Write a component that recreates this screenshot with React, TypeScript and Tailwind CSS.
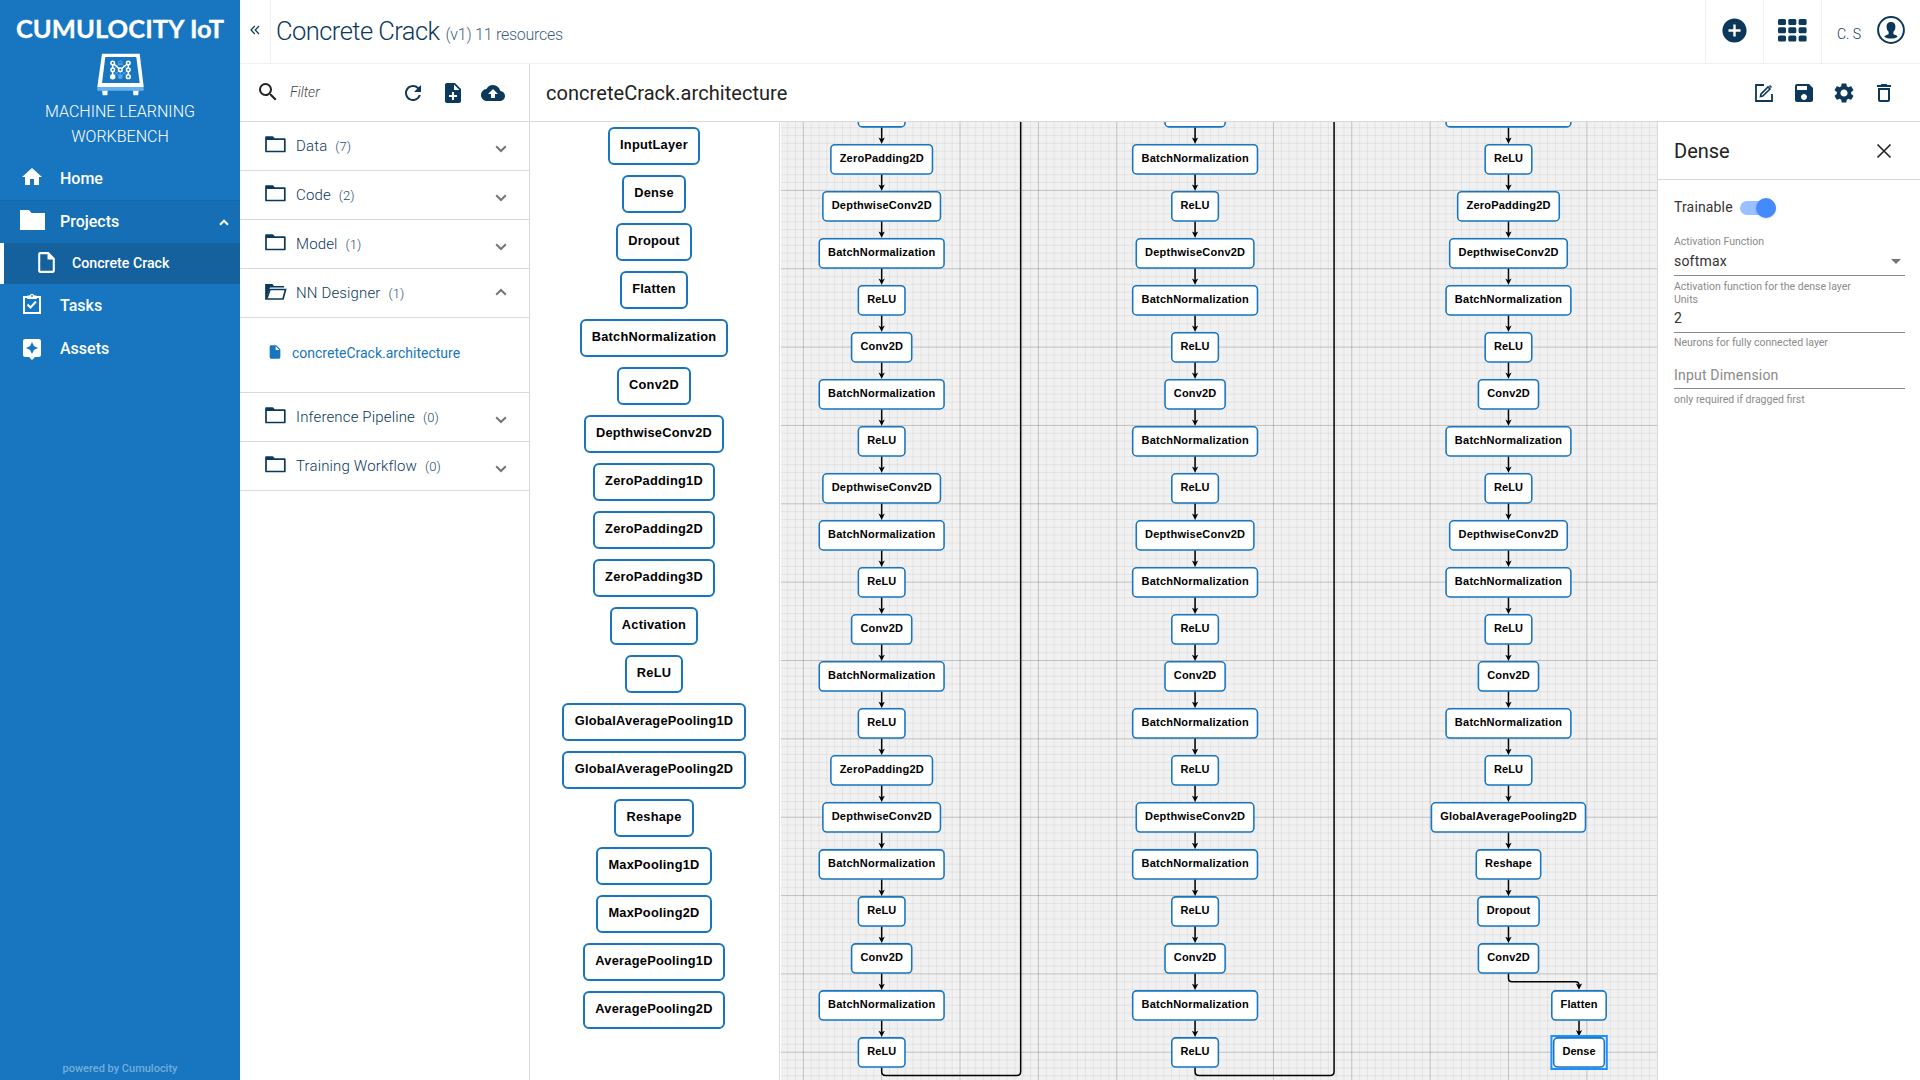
import React from "react";
import {
  MdHome, MdOutlineInsertDriveFile, MdAssistant, MdSearch, MdRefresh, MdCloudUpload, MdNoteAdd,
  MdSave, MdSettings, MdDeleteOutline, MdInsertDriveFile, MdAddCircle,
} from "react-icons/md";

const S = 0.7835;
const COLS = [881.67, 1195.07, 1508.47];
const ROW0 = 159.2;
const PITCH = 47.01;
const OX = 781;
const OY = 122;

const WIDTHS: Record<string, number> = {
  ReLU: 47.2, Conv2D: 60.7, BatchNormalization: 125.4, DepthwiseConv2D: 118.2, ZeroPadding2D: 102.2,
  GlobalAveragePooling2D: 154.6, Reshape: 65, Dropout: 61.8, Flatten: 55, Dense: 51.2,
};
const R = "ReLU", C = "Conv2D", B = "BatchNormalization", D = "DepthwiseConv2D", Z = "ZeroPadding2D";
const CHAINS: string[][] = [
  [R, Z, D, B, R, C, B, R, D, B, R, C, B, R, Z, D, B, R, C, B, R],
  [C, B, R, D, B, R, C, B, R, D, B, R, C, B, R, D, B, R, C, B, R],
  [B, R, Z, D, B, R, C, B, R, D, B, R, C, B, R, "GlobalAveragePooling2D", "Reshape", "Dropout", C],
];

const PALETTE: [string, number][] = [
  ["InputLayer", 92], ["Dense", 64], ["Dropout", 76], ["Flatten", 68], [B, 148], [C, 74], [D, 140],
  ["ZeroPadding1D", 122], [Z, 122], ["ZeroPadding3D", 122], ["Activation", 88], [R, 58],
  ["GlobalAveragePooling1D", 184], ["GlobalAveragePooling2D", 184], ["Reshape", 80], ["MaxPooling1D", 116],
  ["MaxPooling2D", 116], ["AveragePooling1D", 142], ["AveragePooling2D", 142],
];

function Node({ label, x, y, bare }: { label: string; x: number; y: number; bare?: boolean }) {
  const w = WIDTHS[label];
  return (
    <g>
      <rect x={x - w / 2 + 0.3} y={y - 14.5} width={w - 0.6} height={29.2} rx={4} fill="#fff" stroke="#1776bf" strokeWidth={1.55} />
      {!bare && (
        <text x={x} y={y + 2.8} textAnchor="middle" className="fill-black font-['Liberation_Sans',sans-serif] text-[11px] font-bold" textLength={w - 18.2} lengthAdjust="spacing">{label}</text>
      )}
    </g>
  );
}

function Arrow({ x, y }: { x: number; y: number }) {
  return <path d={`M${x} ${y} l-3.13 -6.27 l3.13 1.57 l3.13 -1.57 z`} />;
}

function gridLines() {
  const minor: string[] = [];
  const major: string[] = [];
  for (let i = -3; i < 110; i++) {
    const x = 803.33 - OX + i * 10 * S;
    (i % 10 === 0 ? major : minor).push(`M${x.toFixed(2)} 0V958`);
  }
  for (let i = -9; i < 115; i++) {
    const y = 190.4 - OY + i * 10 * S;
    (i % 10 === 0 ? major : minor).push(`M0 ${y.toFixed(2)}H876`);
  }
  return { minor: minor.join(""), major: major.join("") };
}

function Diagram() {
  const grid = gridLines();
  const cx = (c: number) => COLS[c] - OX;
  const cy = (k: number) => ROW0 - OY + k * PITCH;
  const fx = 1579 - OX;
  return (
    <svg width="876" height="958" viewBox="0 0 876 958" className="block bg-[#f1f1f1]">
      <path d={grid.minor} stroke="#000" strokeOpacity={0.07} strokeWidth={0.8} fill="none" />
      <path d={grid.major} stroke="#000" strokeOpacity={0.22} strokeWidth={0.9} fill="none" />
      <g stroke="#000" strokeWidth={1.5} fill="none">
        {CHAINS.map((ch, c) => ch.slice(1).map((_, i) => (
          <path key={`${c}-${i}`} d={`M${cx(c)} ${cy(i - 1) + 15}V${cy(i) - 18}`} />
        )))}
        {[0, 1].map((c) => (
          <path key={c} d={`M${cx(c)} ${cy(19) + 15}V949.4q0 4 4 4H${cx(c) + 135}q4 0 4 -4V0`} />
        ))}
        <path d={`M${cx(2)} ${cy(17) + 15}v5q0 3.5 3.5 3.5H${fx - 3.5}q3.5 0 3.5 3.5`} />
        <path d={`M${fx} ${cy(18) + 15}V${cy(19) - 19}`} />
      </g>
      {CHAINS.map((ch, c) => ch.slice(1).map((_, i) => <Arrow key={`${c}-${i}`} x={cx(c)} y={cy(i) - 15.4} />))}
      <Arrow x={fx} y={cy(18) - 15.6} />
      <Arrow x={fx} y={cy(19) - 16} />
      {CHAINS.map((ch, c) => ch.map((l, i) => <Node key={`${c}-${i}`} label={l} x={cx(c)} y={cy(i - 1)} bare={i === 0} />))}
      <Node label="Flatten" x={fx} y={cy(18)} />
      <Node label="Dense" x={fx} y={cy(19)} />
      <rect x={fx - 27.6} y={cy(19) - 16.4} width={55.4} height={33} fill="none" stroke="#1e90ff" strokeWidth={2} />
    </svg>
  );
}

function Palette() {
  return (
    <div className="flex w-[250px] shrink-0 flex-col items-center gap-[10px] border-r border-[#d9d9d9] pr-[1px] pt-[5px]">
      {PALETTE.map(([l, w]) => (
        <div key={l} className="flex h-[38px] shrink-0 items-center justify-center rounded-[6px] border-2 border-[#1776bf] pb-[3px] font-['Liberation_Sans',sans-serif] text-[12.8px] font-bold tracking-[0.25px] text-black" style={{ width: w }}>
          {l}
        </div>
      ))}
    </div>
  );
}

function BenchLogo() {
  return (
    <svg width="47" height="43" viewBox="0 0 47 43" className="shrink-0">
      <path fillRule="evenodd" d="M5 .7h37.700L46.700 34H.3zM8.300 4L5 30h37.700L39.300 4z" fill="#fff" />
      <path d="M.3 34h46.400v3.700H.3z" fill="#64b0f0" />
      <path d="M5 37.700h5.700l-.3 4.500H5.700zM36 37.700h5.700l-.6 4.500h-4.700z" fill="#fff" />
      <g stroke="#5aa5e6" strokeWidth="1" fill="none">
        <path d="M15.700 16.700l7.600-6.700 8 6.700M15.700 23.700l7.600-7 8 7M15.700 16.700l7.600 7 8-7M23.300 17v6" />
        <circle cx="23.300" cy="9.800" r="1.900" /><circle cx="23.300" cy="23.700" r="1.900" fill="#5aa5e6" />
      </g>
      <g stroke="#fff" strokeWidth="1.500" fill="#1776bf">
        <path d="M15.700 23.700V10l7.600 6.700 8-6.700v13.700" fill="none" />
        <circle cx="15.700" cy="10" r="1.800" /><circle cx="31.300" cy="10" r="1.800" />
        <circle cx="15.700" cy="16.700" r="1.800" /><circle cx="31.300" cy="16.700" r="1.800" /><circle cx="23.300" cy="16.700" r="1.800" />
        <circle cx="15.700" cy="23.700" r="2" fill="#fff" /><circle cx="31.300" cy="23.700" r="1.900" />
      </g>
    </svg>
  );
}

function TaskIcon() {
  return (
    <svg width="20" height="22" viewBox="0 0 20 22" fill="none" stroke="#fff" strokeWidth="2" className="mt-[-4px]">
      <path d="M2 4h16v16H2z" />
      <path d="M5.500 5.500h9V3h-2.300a2.300 2.300 0 0 0-4.400 0H5.500z" fill="#fff" strokeWidth="1" />
      <circle cx="10" cy="3" r=".9" fill="#1776bf" stroke="none" />
      <path d="M5.500 11.500l3 3 5.500-6" />
    </svg>
  );
}

function Sidebar() {
  const item = "flex shrink-0 items-center text-[16px] font-medium";
  return (
    <aside className="flex w-[240px] shrink-0 flex-col bg-[#1776bf] text-white">
      <div className="flex h-[157px] shrink-0 flex-col items-center">
        <div className="mt-[12px] h-[32px] whitespace-nowrap font-['Lato',sans-serif] text-[25.500px] font-bold leading-[32px] tracking-[0.05px] [-webkit-text-stroke:0.3px_white]">CUMULOCITY IoT</div>
        <div className="mt-[9px] flex"><BenchLogo /></div>
        <div className="mt-[3px] text-center text-[16px] font-light leading-[25px]">MACHINE LEARNING<br />WORKBENCH</div>
      </div>
      <div className={item + " h-[43px] pl-[20px]"}><MdHome size={24} className="mt-[-3px]" /><span className="ml-4">Home</span></div>
      <div className={item + " h-[43px] border-t border-[#1468a9] bg-[#166fb4] pl-[18px]"}>
        <svg width="28" height="22" viewBox="0 0 28 22" className="mt-[-4px]"><path d="M2 1h9l2.500 3H27v17H2z" fill="#fff" /></svg>
        <span className="ml-[14px]">Projects</span>
        <svg width="10" height="7" viewBox="0 0 10 7" className="ml-auto mr-[11px]"><path d="M1 5.700l4-4 4 4" stroke="#fff" strokeWidth="2" fill="none" /></svg>
      </div>
      <div className="flex h-[41px] shrink-0 items-center border-l-4 border-white bg-[#15619e] pl-[30px] text-[14px] font-medium">
        <MdOutlineInsertDriveFile size={25} className="mt-[-3px]" /><span className="ml-[13px] text-[14.200px]">Concrete Crack</span>
      </div>
      <div className={item + " h-[43px] pl-[22px]"}><TaskIcon /><span className="ml-[18px]">Tasks</span></div>
      <div className={item + " h-[43px] pl-[20px]"}><MdAssistant size={24} /><span className="ml-4">Assets</span></div>
      <div className="mt-auto pb-[3px] text-center text-[11px] font-medium leading-4 text-[#74add9]">powered by Cumulocity</div>
    </aside>
  );
}

function Chevron({ up }: { up?: boolean }) {
  return (
    <svg width="12" height="8" viewBox="0 0 12 8" className={up ? "ml-auto mr-[22px] mt-[-3px]" : "ml-auto mr-[22px] mt-[5px]"}>
      <path d={up ? "M1.200 6.800L6 2l4.800 4.800" : "M1.200 1.200L6 6l4.800-4.800"} stroke="#757575" strokeWidth="2" fill="none" />
    </svg>
  );
}

function FolderIcon({ open }: { open?: boolean }) {
  return (
    <svg width="22" height="17" viewBox="0 0 22 17" className="mt-[-4px]">
      {open ? (
        <>
          <path d="M1 15V1h6.500l1.500 2h10v1.500H5L2 13z" fill="#0b385b" />
          <path d="M1 1v15h17l2.600-9.500H5L2 15" stroke="#0b385b" strokeWidth="1.700" fill="none" />
        </>
      ) : (
        <>
          <path d="M1 15.500V1h6.500L9.500 3.200H19.800v12.300z" stroke="#0b385b" strokeWidth="1.700" fill="none" strokeLinejoin="round" />
          <path d="M1 1h6.500L9.500 4H1z" fill="#0b385b" />
        </>
      )}
    </svg>
  );
}

function Folder({ name, n, open }: { name: string; n: number; open?: boolean }) {
  return (
    <div className="flex h-[49px] shrink-0 items-center border-b border-[#d9d9d9] pl-[25px] text-[#0b385b]">
      <FolderIcon open={open} />
      <span className="ml-[9px] text-[15px] font-light tracking-[0.15px]">{name}</span>
      <span className="ml-2 pt-[2px] text-[13px] font-light opacity-90">({n})</span>
      <Chevron up={open} />
    </div>
  );
}

function Resources() {
  return (
    <section className="flex w-[290px] shrink-0 flex-col border-r border-[#d9d9d9]">
      <div className="flex h-[58px] shrink-0 items-center border-b border-[#d9d9d9] pl-[16px] text-[#0b385b]">
        <MdSearch size={24} className="mt-[-2px] text-[#222]" />
        <span className="ml-[10px] text-[14px] font-light italic text-[#444]">Filter</span>
        <MdRefresh size={24} className="ml-[81px]" />
        <MdNoteAdd size={24} className="ml-[16px]" />
        <MdCloudUpload size={24} className="ml-[16px]" />
      </div>
      <Folder name="Data" n={7} />
      <Folder name="Code" n={2} />
      <Folder name="Model" n={1} />
      <Folder name="NN Designer" n={1} open />
      <div className="flex h-[75px] shrink-0 items-center border-b border-[#d9d9d9] pb-[4px] pl-[27px] text-[#1776bf]">
        <MdInsertDriveFile size={16} className="mt-[-2px]" />
        <span className="ml-[9px] text-[14px]">concreteCrack.architecture</span>
      </div>
      <Folder name="Inference Pipeline" n={0} />
      <Folder name="Training Workflow" n={0} />
    </section>
  );
}

function TopBar() {
  return (
    <header className="flex h-[64px] shrink-0 border-b border-[#f0f0f0] text-[#0b385b]">
      <div className="flex w-[31px] items-center justify-center border-r border-[#f0f0f0] pb-[3px]">
        <svg width="10" height="10" viewBox="0 0 10 10" fill="none" stroke="#0b385b" strokeWidth="1.200"><path d="M4.800 1L1 5l3.800 4M9 1L5.200 5 9 9" /></svg>
      </div>
      <div className="flex items-baseline pl-[5px] pt-[12px] font-light">
        <span className="text-[25.500px] tracking-[-0.55px]">Concrete Crack</span>
        <span className="ml-[6px] text-[16px] tracking-[-0.25px] opacity-80">(v1) 11 resources</span>
      </div>
      <div className="ml-auto flex w-[58px] items-center justify-center border-l border-[#f0f0f0] pb-[2px]"><MdAddCircle size={29} /></div>
      <div className="flex w-[58px] items-center justify-center border-l border-[#f0f0f0] pb-[3px]">
        <svg width="29" height="23" viewBox="0 0 29 23" fill="#0b385b">
          {[0, 1, 2].map((r) => [0, 1, 2].map((c) => <rect key={`${r}${c}`} x={c * 10.300} y={r * 8.300} width="8" height="6" rx="1.500" />))}
        </svg>
      </div>
      <div className="flex w-[99px] items-center border-l border-[#f0f0f0] pl-[15px]">
        <span className="pt-[5px] text-[14px] font-light">C. S</span>
        <svg width="28" height="28" viewBox="0 0 28 28" className="ml-[16px] mt-[-3px]">
          <circle cx="14" cy="14" r="12.900" stroke="#0b385b" strokeWidth="2" fill="none" />
          <path d="M14 6c3.200 0 4.600 2.200 4.400 5.200-.1 2-1 3.600-2 4.600v2.400c2.200.6 3.600 1.300 4.300 2.500C19 22 16.600 22.500 14 22.500S9 22 7.300 20.700c.7-1.200 2.100-1.900 4.300-2.500v-2.400c-1-1-1.900-2.600-2-4.600C9.400 8.200 10.800 6 14 6z" fill="#0b385b" />
        </svg>
      </div>
    </header>
  );
}

function Properties() {
  return (
    <section className="flex w-[263px] shrink-0 flex-col border-l border-[#d9d9d9]">
      <div className="flex h-[58px] shrink-0 items-center justify-between border-b border-[#d9d9d9] pl-[16px] pr-[28px]">
        <span className="text-[20px] text-[#222]">Dense</span>
        <svg width="16" height="16" viewBox="0 0 16 16" stroke="#222" strokeWidth="1.600"><path d="M1.500 1.500l13 13M14.500 1.500l-13 13" /></svg>
      </div>
      <div className="flex flex-col pl-[16px] pr-[15px]">
        <div className="mt-[15px] flex h-[25px] items-center text-[14px] tracking-[0.15px] text-[#333]">
          Trainable
          <span className="ml-[7px] flex h-[14px] w-[36px] items-center justify-end rounded-full bg-[#9bc0ff]"><span className="h-5 w-5 rounded-full bg-[#448aff] shadow" /></span>
        </div>
        <div className="mt-[14px] h-[16px] text-[10.500px] leading-4 text-[#8a8a8a]">Activation Function</div>
        <div className="flex h-[26px] items-center justify-between border-b border-[#8a8a8a] pb-[2px] pr-1 text-[14px] tracking-[0.2px] text-[#333]">
          softmax<span className="h-0 w-0 border-x-[5px] border-t-[5px] border-x-transparent border-t-[#757575]" />
        </div>
        <div className="mt-[4px] h-[13px] text-[10.500px] leading-[14px] text-[#8a8a8a]">Activation function for the dense layer</div>
        <div className="h-[13px] text-[10.500px] leading-[13px] text-[#8a8a8a]">Units</div>
        <div className="flex h-[27px] items-center border-b border-[#8a8a8a] pb-[1px] text-[14px] text-[#333]">2</div>
        <div className="mt-[3px] h-[14px] text-[10.500px] leading-[14px] text-[#8a8a8a]">Neurons for fully connected layer</div>
        <div className="mt-[13px] flex h-[26px] items-center border-b border-[#8a8a8a] pb-[1px] text-[14px] tracking-[0.2px] text-[#8a8a8a]">Input Dimension</div>
        <div className="mt-[4px] h-[14px] text-[10.500px] leading-[14px] text-[#8a8a8a]">only required if dragged first</div>
      </div>
    </section>
  );
}

export default function App() {
  return (
    <div className="flex h-[1080px] w-[1920px] overflow-hidden bg-white font-['Roboto',sans-serif]">
      <Sidebar />
      <div className="flex flex-1 flex-col">
        <TopBar />
        <div className="flex flex-1">
          <Resources />
          <main className="flex flex-1 flex-col">
            <div className="flex h-[58px] shrink-0 items-center border-b border-[#d9d9d9] pl-[16px] pr-[28px] text-[#0b385b]">
              <span className="mr-auto pt-[1px] text-[20px] tracking-[0.05px] text-[#222]">concreteCrack.architecture</span>
              <svg width="20" height="20" viewBox="0 0 20 20" fill="none" stroke="#0b385b" strokeWidth="1.800"><path d="M10 2H2v16h16V11" /><path d="M6.500 13.500l.4-2.300L14 4l2 2-7.200 7.100zM15.500 2.500l2 2" strokeWidth="1.600" /></svg>
              <MdSave size={24} className="ml-[18px]" />
              <MdSettings size={24} className="ml-[16px]" />
              <MdDeleteOutline size={24} className="ml-[16px] mr-[-4px]" />
            </div>
            <div className="flex flex-1">
              <Palette />
              <div className="w-[877px] shrink-0 pl-[1px]"><Diagram /></div>
              <Properties />
            </div>
          </main>
        </div>
      </div>
    </div>
  );
}
